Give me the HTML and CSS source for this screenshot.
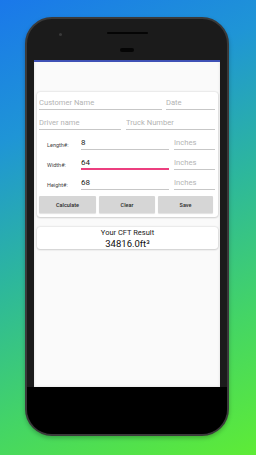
FILE: index.html
```html
<!DOCTYPE html>
<html>
<head>
<meta charset="utf-8">
<link rel="stylesheet" href="styles.css">
</head>
<body>
<div class="phone">
  <div class="top-bezel">
    <span class="top-mark"></span>
    <span class="camera"></span>
    <span class="speaker"></span>
    <span class="sensor"></span>
  </div>
  <span class="side-btn left"></span>
  <span class="side-btn right"></span>
  <div class="screen">
    <div class="appbar"></div>
    <div class="content">
      <div class="card form">
        <div class="row">
          <div class="field f-customer"><span class="hint">Customer Name</span></div>
          <div class="field f-date"><span class="hint">Date</span></div>
        </div>
        <div class="row gap5">
          <div class="field f-driver"><span class="hint">Driver name</span></div>
          <div class="field f-truck"><span class="hint">Truck Number</span></div>
        </div>
        <div class="row gap5">
          <div class="label">Length#:</div>
          <div class="field f-val"><span class="val">8</span></div>
          <div class="field f-unit"><span class="hint">Inches</span></div>
        </div>
        <div class="row gap5">
          <div class="label">Width#:</div>
          <div class="field f-val active"><span class="val">64</span></div>
          <div class="field f-unit"><span class="hint">Inches</span></div>
        </div>
        <div class="row gap5">
          <div class="label">Height#:</div>
          <div class="field f-val"><span class="val">68</span></div>
          <div class="field f-unit"><span class="hint">Inches</span></div>
        </div>
        <div class="buttons">
          <div class="btn b1">Calculate</div>
          <div class="btn b2">Clear</div>
          <div class="btn b3">Save</div>
        </div>
      </div>
      <div class="card result">
        <div class="r-title">Your CFT Result</div>
        <div class="r-value">34816.0ft³</div>
      </div>
    </div>
  </div>
  <div class="bottom-bezel"></div>
</div>
</body>
</html>
```

FILE: styles.css
```css
html, body {
  margin: 0;
  padding: 0;
}
body {
  width: 256px;
  height: 455px;
  overflow: hidden;
  background: linear-gradient(155deg, #1a78ea 0%, #1f95d6 25%, #2db79c 50%, #44d565 75%, #5eec36 100%);
  font-family: Roboto, "Liberation Sans", sans-serif;
  padding-top: 17px;
  box-sizing: border-box;
}
.phone {
  position: relative;
  margin-left: 25px;
  width: 204px;
  height: 419px;
  box-sizing: border-box;
  border: 2px solid #3a3a3a;
  border-radius: 27px;
  background: #1b1b1b;
  display: flex;
  flex-direction: column;
  align-items: center;
  overflow: hidden;
  box-shadow: 0 2px 4px rgba(0,0,0,0.25);
}
.top-bezel {
  position: relative;
  width: 100%;
  height: 41px;
  flex: none;
}
.top-mark {
  position: absolute;
  left: 155px;
  top: -2px;
  width: 2px;
  height: 2px;
  background: #222;
}
.camera {
  position: absolute;
  left: 32px;
  top: 14px;
  width: 3px;
  height: 3px;
  border-radius: 50%;
  background: #3a3a3a;
}
.speaker {
  position: absolute;
  left: 80px;
  top: 13px;
  width: 41px;
  height: 2px;
  border-radius: 1px;
  background: #050505;
}
.sensor {
  position: absolute;
  left: 93px;
  top: 29px;
  width: 14px;
  height: 4px;
  border-radius: 2px;
  background: #050505;
}
.side-btn {
  position: absolute;
  top: 36px;
  width: 1px;
  height: 2px;
  background: #0c0c0c;
}
.side-btn.left { left: -2px; }
.side-btn.right { right: -2px; }
.screen {
  width: 186px;
  height: 327px;
  flex: none;
  background: #fafafa;
  display: flex;
  flex-direction: column;
  box-shadow: inset 0 0 3px rgba(0,0,0,0.12);
}
.appbar {
  height: 2px;
  background: #3f51b5;
  flex: none;
}
.content {
  padding: 30px 2px 0 3px;
  display: flex;
  flex-direction: column;
}
.card {
  background: #fff;
  border-radius: 3px;
  box-shadow: 0 0 2px rgba(0,0,0,0.22), 0 1px 2px rgba(0,0,0,0.12);
}
.form {
  padding: 3px 3px 4px 2px;
  display: flex;
  flex-direction: column;
}
.row {
  display: flex;
  gap: 4px;
  height: 15px;
  margin-top: 0;
}
.row.gap5 {
  gap: 5px;
  margin-top: 5px;
}
.field {
  box-sizing: border-box;
  height: 15px;
  border-bottom: 1px solid #c7c7c7;
  display: flex;
  align-items: flex-end;
  padding-bottom: 1px;
  overflow: hidden;
  white-space: nowrap;
}
.f-customer { width: 123px; }
.f-date { width: 49px; }
.f-driver { width: 82px; }
.f-truck { width: 89px; }
.f-val { width: 88px; }
.f-unit { width: 41px; }
.field.active {
  border-bottom: 2px solid #ec3f7f;
  padding-bottom: 0;
}
.hint {
  font-size: 7.6px;
  color: #b3b3b3;
  line-height: 10px;
}
.val {
  font-size: 8px;
  color: #1a1a1a;
  line-height: 10px;
}
.label {
  width: 37px;
  flex: none;
  padding-left: 8px;
  box-sizing: border-box;
  font-size: 5.5px;
  color: #444;
  display: flex;
  align-items: center;
  padding-top: 4px;
}
.buttons {
  display: flex;
  gap: 3px;
  margin-top: 6px;
  height: 17px;
}
.btn {
  height: 17px;
  background: #d6d6d6;
  border-radius: 1px;
  font-size: 5.5px;
  font-weight: 500;
  color: #2b2b2b;
  display: flex;
  align-items: center;
  justify-content: center;
  box-shadow: 0 1px 1px rgba(0,0,0,0.12);
}
.b1 { width: 57px; }
.b2 { width: 56px; }
.b3 { width: 55px; }
.result {
  margin-top: 10px;
  height: 22px;
  display: flex;
  flex-direction: column;
  align-items: center;
  justify-content: center;
}
.r-title {
  font-size: 7.5px;
  color: #222;
  line-height: 10px;
}
.r-value {
  font-size: 9.5px;
  color: #111;
  line-height: 11px;
  margin-bottom: -1px;
}
.bottom-bezel {
  flex: 1;
  width: 100%;
  background: #000;
}
```
